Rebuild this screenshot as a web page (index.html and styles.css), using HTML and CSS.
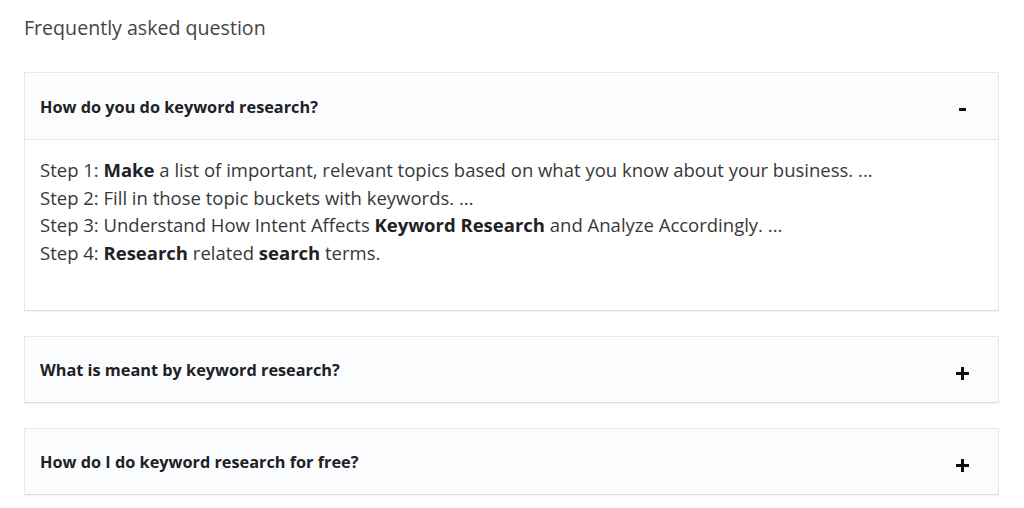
FILE: index.html
```html
<!DOCTYPE html>
<html>
<head>
<meta charset="utf-8">
<link rel="stylesheet" href="styles.css">
</head>
<body>
<main class="faq">
  <h2 class="faq-title">Frequently asked question</h2>
  <section class="card open">
    <div class="card-head">
      <span class="q">How do you do keyword research?</span>
      <span class="toggle minus"></span>
    </div>
    <div class="card-body">
      <p>Step 1: <b>Make</b> a list of important, relevant topics based on what you know about your business. ...<br>
      Step 2: Fill in those topic buckets with keywords. ...<br>
      Step 3: Understand How Intent Affects <b>Keyword Research</b> and Analyze Accordingly. ...<br>
      Step 4: <b>Research</b> related <b>search</b> terms.</p>
    </div>
  </section>
  <section class="card">
    <div class="card-head">
      <span class="q">What is meant by keyword research?</span>
      <span class="toggle plus"></span>
    </div>
  </section>
  <section class="card">
    <div class="card-head">
      <span class="q">How do I do keyword research for free?</span>
      <span class="toggle plus"></span>
    </div>
  </section>
</main>
</body>
</html>
```
FILE: styles.css
```css
* { box-sizing: border-box; }
html, body { margin: 0; background: #ffffff; }
body {
  font-family: "Open Sans", "Noto Sans", sans-serif;
  color: #212529;
}
.faq {
  padding: 15px 25px 0 24px;
  display: flex;
  flex-direction: column;
}
.faq-title {
  margin: 0 0 31px 0;
  font-size: 19.6px;
  font-weight: 400;
  color: #444;
  line-height: 26px;
}
.card {
  border: 1px solid #e6e8ec;
  border-bottom-color: #dcdee2;
  box-shadow: 0 1px 1px rgba(0,0,0,0.04);
  margin-bottom: 25px;
  background: #fff;
}
.card-head {
  height: 65px;
  display: flex;
  align-items: center;
  justify-content: space-between;
  padding: 0 29px 0 15px;
  background: #fbfcfe;
}
.open .card-head { border-bottom: 1px solid #e6e8ec; height: 67px; }
.q {
  font-size: 16.3px;
  font-weight: 700;
  color: #1e2125;
  margin-top: 1px;
}
.toggle {
  position: relative;
  width: 13px;
  height: 13px;
  margin-top: 8px;
}
.toggle::before {
  content: "";
  position: absolute;
  left: 0; right: 0;
  top: 5px;
  height: 3px;
  background: #111;
}
.minus::before { left: 3px; right: 3px; top: 3px; height: 3px; }
.open .toggle { margin-top: 10px; }
.plus::after {
  content: "";
  position: absolute;
  top: 0; bottom: 0;
  left: 5px;
  width: 3px;
  background: #111;
}
.card-body {
  height: 170px;
  padding: 16px 15px;
  background: #fff;
}
.card-body p {
  margin: 0;
  font-size: 18.5px;
  line-height: 27.5px;
  color: #383838;
}
.card-body b { color: #1e2125; }
```
